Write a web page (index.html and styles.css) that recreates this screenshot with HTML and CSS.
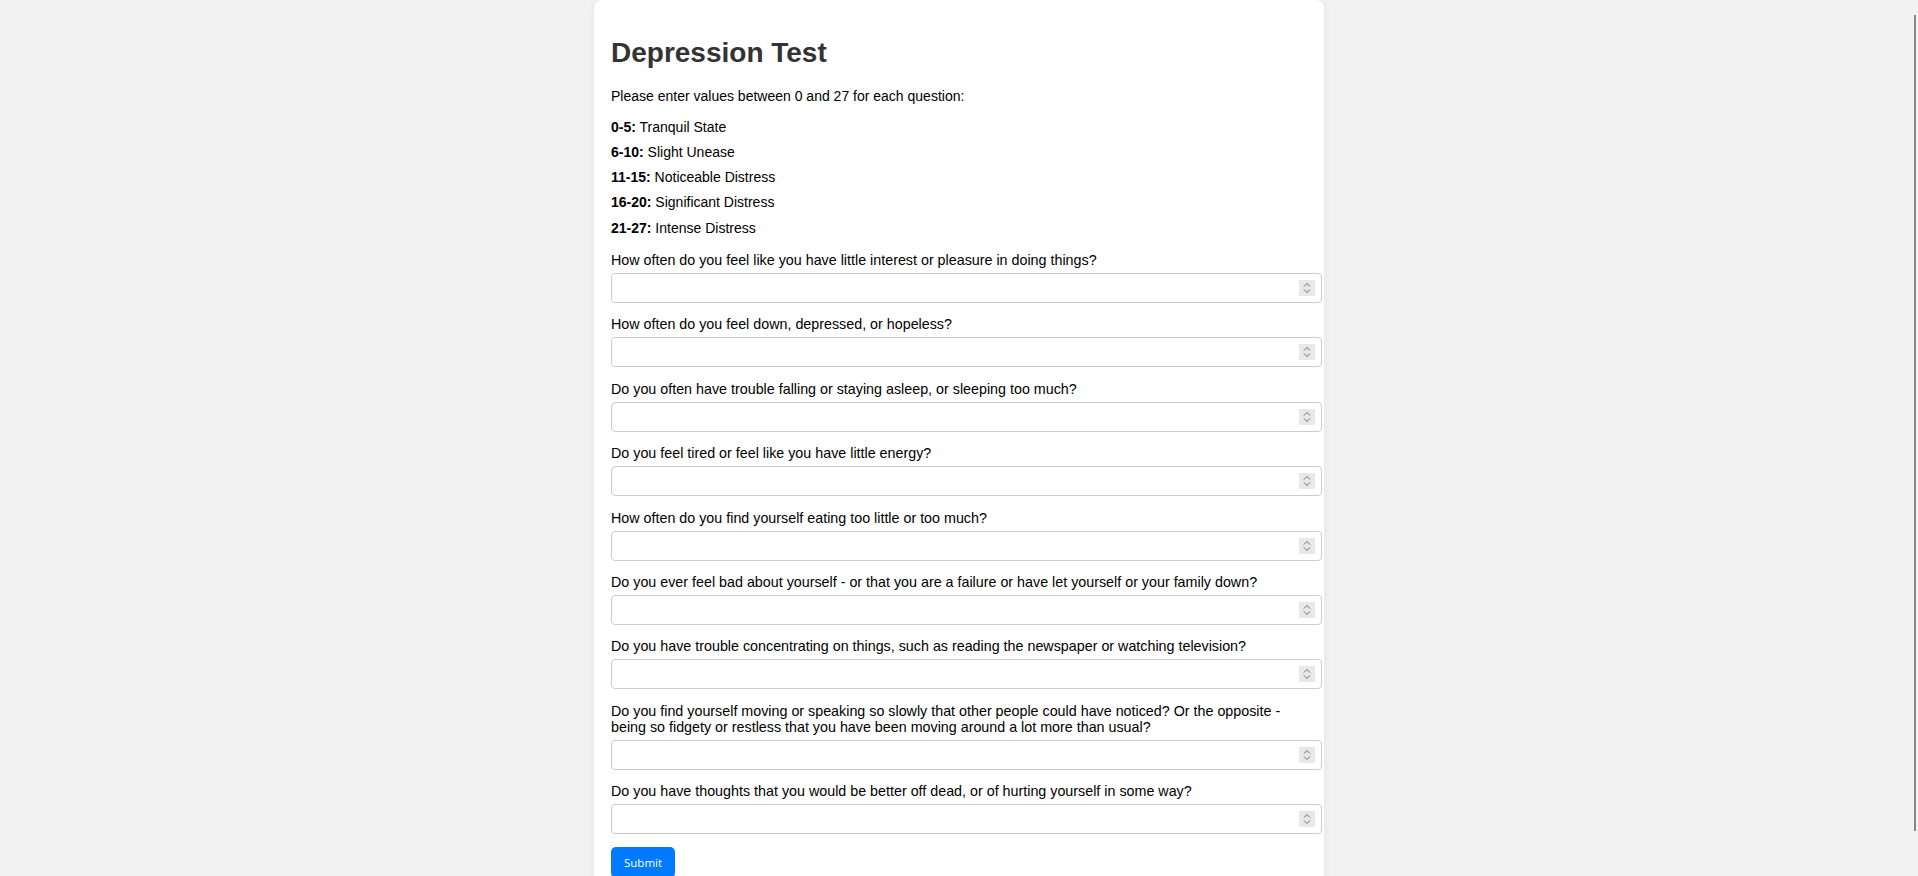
FILE: index.html
```html
<!DOCTYPE html>
<html lang="en">
<head>
<meta charset="utf-8">
<title>Depression Test</title>
<link rel="stylesheet" href="styles.css">
</head>
<body>
<main class="card">
  <h1 class="title">Depression Test</h1>
  <p class="intro">Please enter values between 0 and 27 for each question:</p>
  <div class="ranges">
    <p class="range"><strong>0-5:</strong> Tranquil State</p>
    <p class="range"><strong>6-10:</strong> Slight Unease</p>
    <p class="range"><strong>11-15:</strong> Noticeable Distress</p>
    <p class="range"><strong>16-20:</strong> Significant Distress</p>
    <p class="range"><strong>21-27:</strong> Intense Distress</p>
  </div>
  <form class="form">
    <label class="q-label" for="q1">How often do you feel like you have little interest or pleasure in doing things?</label>
    <div class="field"><input class="q-input" type="number" id="q1" min="0" max="27"><svg class="spin" width="16" height="16" viewBox="0 0 16 16"><rect width="16" height="16" fill="#e8e8e8"/><polyline points="5,6.5 8,3.5 11,6.5" fill="none" stroke="#6f6f6f" stroke-width="1"/><polyline points="5,9.5 8,12.5 11,9.5" fill="none" stroke="#6f6f6f" stroke-width="1"/></svg></div>
    <label class="q-label" for="q2">How often do you feel down, depressed, or hopeless?</label>
    <div class="field"><input class="q-input" type="number" id="q2" min="0" max="27"><svg class="spin" width="16" height="16" viewBox="0 0 16 16"><rect width="16" height="16" fill="#e8e8e8"/><polyline points="5,6.5 8,3.5 11,6.5" fill="none" stroke="#6f6f6f" stroke-width="1"/><polyline points="5,9.5 8,12.5 11,9.5" fill="none" stroke="#6f6f6f" stroke-width="1"/></svg></div>
    <label class="q-label" for="q3">Do you often have trouble falling or staying asleep, or sleeping too much?</label>
    <div class="field"><input class="q-input" type="number" id="q3" min="0" max="27"><svg class="spin" width="16" height="16" viewBox="0 0 16 16"><rect width="16" height="16" fill="#e8e8e8"/><polyline points="5,6.5 8,3.5 11,6.5" fill="none" stroke="#6f6f6f" stroke-width="1"/><polyline points="5,9.5 8,12.5 11,9.5" fill="none" stroke="#6f6f6f" stroke-width="1"/></svg></div>
    <label class="q-label" for="q4">Do you feel tired or feel like you have little energy?</label>
    <div class="field"><input class="q-input" type="number" id="q4" min="0" max="27"><svg class="spin" width="16" height="16" viewBox="0 0 16 16"><rect width="16" height="16" fill="#e8e8e8"/><polyline points="5,6.5 8,3.5 11,6.5" fill="none" stroke="#6f6f6f" stroke-width="1"/><polyline points="5,9.5 8,12.5 11,9.5" fill="none" stroke="#6f6f6f" stroke-width="1"/></svg></div>
    <label class="q-label" for="q5">How often do you find yourself eating too little or too much?</label>
    <div class="field"><input class="q-input" type="number" id="q5" min="0" max="27"><svg class="spin" width="16" height="16" viewBox="0 0 16 16"><rect width="16" height="16" fill="#e8e8e8"/><polyline points="5,6.5 8,3.5 11,6.5" fill="none" stroke="#6f6f6f" stroke-width="1"/><polyline points="5,9.5 8,12.5 11,9.5" fill="none" stroke="#6f6f6f" stroke-width="1"/></svg></div>
    <label class="q-label" for="q6">Do you ever feel bad about yourself - or that you are a failure or have let yourself or your family down?</label>
    <div class="field"><input class="q-input" type="number" id="q6" min="0" max="27"><svg class="spin" width="16" height="16" viewBox="0 0 16 16"><rect width="16" height="16" fill="#e8e8e8"/><polyline points="5,6.5 8,3.5 11,6.5" fill="none" stroke="#6f6f6f" stroke-width="1"/><polyline points="5,9.5 8,12.5 11,9.5" fill="none" stroke="#6f6f6f" stroke-width="1"/></svg></div>
    <label class="q-label" for="q7">Do you have trouble concentrating on things, such as reading the newspaper or watching television?</label>
    <div class="field"><input class="q-input" type="number" id="q7" min="0" max="27"><svg class="spin" width="16" height="16" viewBox="0 0 16 16"><rect width="16" height="16" fill="#e8e8e8"/><polyline points="5,6.5 8,3.5 11,6.5" fill="none" stroke="#6f6f6f" stroke-width="1"/><polyline points="5,9.5 8,12.5 11,9.5" fill="none" stroke="#6f6f6f" stroke-width="1"/></svg></div>
    <label class="q-label" for="q8">Do you find yourself moving or speaking so slowly that other people could have noticed? Or the opposite - being so fidgety or restless that you have been moving around a lot more than usual?</label>
    <div class="field"><input class="q-input" type="number" id="q8" min="0" max="27"><svg class="spin" width="16" height="16" viewBox="0 0 16 16"><rect width="16" height="16" fill="#e8e8e8"/><polyline points="5,6.5 8,3.5 11,6.5" fill="none" stroke="#6f6f6f" stroke-width="1"/><polyline points="5,9.5 8,12.5 11,9.5" fill="none" stroke="#6f6f6f" stroke-width="1"/></svg></div>
    <label class="q-label" for="q9">Do you have thoughts that you would be better off dead, or of hurting yourself in some way?</label>
    <div class="field"><input class="q-input" type="number" id="q9" min="0" max="27"><svg class="spin" width="16" height="16" viewBox="0 0 16 16"><rect width="16" height="16" fill="#e8e8e8"/><polyline points="5,6.5 8,3.5 11,6.5" fill="none" stroke="#6f6f6f" stroke-width="1"/><polyline points="5,9.5 8,12.5 11,9.5" fill="none" stroke="#6f6f6f" stroke-width="1"/></svg></div>
    <button class="submit" type="button">Submit</button>
  </form>
</main>
<div class="scroll-thumb" aria-hidden="true"></div>
</body>
</html>
```

FILE: styles.css
```css
html {
  background: #f2f2f2;
}
html::-webkit-scrollbar {
  display: none;
}
body {
  margin: 0;
  font-family: "Liberation Sans", Arial, sans-serif;
  font-size: 14px;
  color: #000;
}
.card {
  box-sizing: border-box;
  width: 730px;
  margin: 0 auto 12px;
  padding: 18px 17px 18px;
  background: #fff;
  border-radius: 8px;
  box-shadow: 0 0 8px rgba(0, 0, 0, 0.06);
}
.title {
  margin: 18.8px 0;
  font-size: 28px;
  font-weight: bold;
  color: #333;
}
.intro {
  margin: 0 0 15px;
}
.ranges {
  margin-bottom: 16.2px;
}
.range {
  margin: 0 0 9.3px;
}
.range:last-child {
  margin-bottom: 0;
}
.form {
  display: flex;
  flex-direction: column;
  align-items: flex-start;
}
.q-label {
  display: block;
  margin-bottom: 5px;
  font-size: 14.3px;
  line-height: 16px;
}
.field {
  position: relative;
  width: calc(100% + 15px);
  margin: 0 0 13.4px;
}
.q-input {
  display: block;
  box-sizing: border-box;
  width: 100%;
  height: 30px;
  padding: 0 30px 0 7px;
  margin: 0;
  border: 1px solid #ccc;
  border-radius: 4px;
  background: #fff;
  font-family: "Liberation Sans", Arial, sans-serif;
  font-size: 14px;
}
.q-input::-webkit-inner-spin-button,
.q-input::-webkit-outer-spin-button {
  -webkit-appearance: none;
  margin: 0;
}
.spin {
  position: absolute;
  top: 7px;
  right: 7px;
}
.submit {
  padding: 8px 13px;
  border: none;
  border-radius: 5px;
  background: #007bff;
  color: #fff;
  font-family: "Open Sans", sans-serif;
  font-size: 11.5px;
}
.scroll-thumb {
  position: fixed;
  top: 15px;
  right: 2px;
  width: 2px;
  height: 816px;
  background: #888;
}
```
